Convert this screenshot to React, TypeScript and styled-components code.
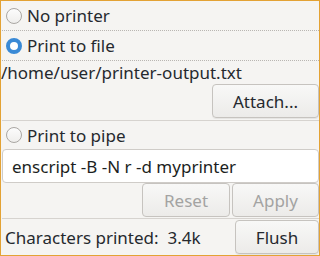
import React from 'react';
import styled, { createGlobalStyle } from 'styled-components';

const GlobalStyle = createGlobalStyle`
  html, body {
    margin: 0;
    padding: 0;
    background: #f5f4f2;
  }
  * {
    box-sizing: border-box;
  }
`;

const Window = styled.div`
  width: 320px;
  height: 256px;
  border: 1px solid #e3a234;
  background: #f5f4f2;
  display: flex;
  flex-direction: column;
  font-family: 'Noto Sans', 'Open Sans', sans-serif;
  font-size: 17px;
  color: #25292e;
  overflow: hidden;
`;

const RadioRow = styled.label<{ $dotted?: boolean; $h: number }>`
  display: flex;
  align-items: center;
  gap: 5px;
  height: ${(p) => p.$h}px;
  padding-left: 4px;
  margin-left: 1px;
  border-bottom: ${(p) => (p.$dotted ? '1px dotted #b9b6b2' : 'none')};
`;

const RadioDot = styled.span<{ $checked?: boolean }>`
  width: 16px;
  height: 16px;
  border-radius: 50%;
  flex: none;
  border: ${(p) => (p.$checked ? '4px solid #3a8ad6' : '1px solid #aaa7a3')};
  background: ${(p) =>
    p.$checked ? '#fff' : 'linear-gradient(#fcfcfc, #efeeec)'};
`;

const PathText = styled.div`
  height: 23px;
  display: flex;
  align-items: center;
`;

const ButtonRow = styled.div<{ $h: number }>`
  display: flex;
  justify-content: flex-end;
  align-items: flex-start;
  gap: 2px;
  height: ${(p) => p.$h}px;
`;

const Button = styled.button<{ $w: number; $disabled?: boolean }>`
  width: ${(p) => p.$w}px;
  height: 34px;
  border: 1px solid #c6c3bf;
  border-radius: 4px;
  background: linear-gradient(#f8f8f7, #ecebe9);
  font-family: inherit;
  font-size: 17px;
  color: ${(p) => (p.$disabled ? '#a3a3a2' : '#25292e')};
  padding: 0;
  box-shadow: ${(p) => (p.$disabled ? 'none' : '0 1px 0 rgba(0,0,0,0.06)')};
`;

const Separator = styled.div`
  height: 1px;
  background: #d6d3cf;
  margin-left: 1px;
`;

const Input = styled.div`
  height: 34px;
  margin-left: 1px;
  border: 1px solid #cfccc8;
  border-radius: 4px;
  background: #fff;
  display: flex;
  align-items: center;
  padding-left: 9px;
  color: #1c1f22;
`;

const StatusRow = styled.div`
  flex: 1;
  display: flex;
  align-items: center;
  justify-content: space-between;
  padding-left: 4px;
`;

export default function App() {
  return (
    <>
      <GlobalStyle />
      <Window>
        <RadioRow $dotted $h={30}>
          <RadioDot />
          No printer
        </RadioRow>
        <RadioRow $dotted $h={30}>
          <RadioDot $checked />
          Print to file
        </RadioRow>
        <PathText>/home/user/printer-output.txt</PathText>
        <ButtonRow $h={36}>
          <Button $w={107}>Attach...</Button>
        </ButtonRow>
        <Separator />
        <RadioRow $h={28}>
          <RadioDot />
          Print to pipe
        </RadioRow>
        <Input>enscript -B -N r -d myprinter</Input>
        <ButtonRow $h={35}>
          <Button $w={88} $disabled>
            Reset
          </Button>
          <Button $w={87} $disabled>
            Apply
          </Button>
        </ButtonRow>
        <Separator />
        <StatusRow>
          <span>Characters printed:&nbsp; 3.4k</span>
          <Button $w={84}>Flush</Button>
        </StatusRow>
      </Window>
    </>
  );
}
